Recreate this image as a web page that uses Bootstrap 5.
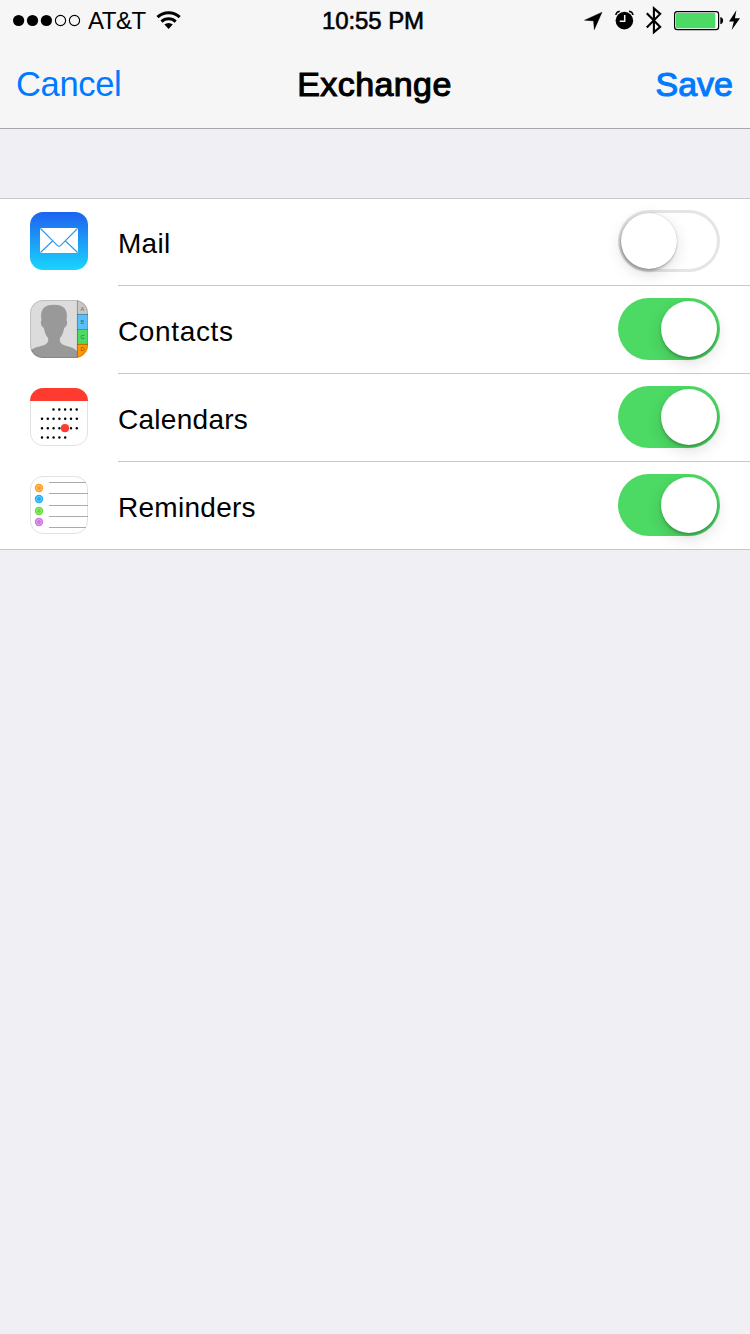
<!DOCTYPE html>
<html lang="en">
<head>
<meta charset="utf-8">
<meta name="viewport" content="width=device-width, initial-scale=1">
<title>Exchange</title>
<link rel="stylesheet" href="https://cdn.jsdelivr.net/npm/bootstrap@5.3.0/dist/css/bootstrap.min.css">
<style>
body { font-family: "Liberation Sans", Arial, sans-serif; background: #efeff4; color: #000; min-height: 1334px; }
svg { display: block; flex: none; }
.topbar { background: #f6f6f6; border-bottom: 1px solid #a7a7aa; height: 129px; }
.status-row { height: 40px; }
.side-col { flex: 1 1 0; }
.carrier { font-size: 24px; line-height: 40px; letter-spacing: -.5px; margin-left: 7px; margin-right: 10px; padding-top: 1px; }
.clock { font-size: 24px; line-height: 40px; -webkit-text-stroke: .6px #000; letter-spacing: -.1px; padding-top: 1px; margin-right: 4px; }
.title-row { height: 88px; padding: 0 17px 0 16px; font-size: 35px; line-height: 88px; }
.title-row a { color: #007aff; text-decoration: none; }
.cancel-link { font-size: 34.5px; letter-spacing: -.35px; }
.screen-title { font-size: 34px; -webkit-text-stroke: 1.1px #000; letter-spacing: .4px; }
.save-link { font-size: 34px; -webkit-text-stroke: 1.1px #007aff; letter-spacing: 0; }
.services { margin-top: 69px; border-top: 1px solid #c8c7cc; border-bottom: 1px solid #c8c7cc; background: #fff; }
.service { height: 88px; padding-left: 30px; gap: 30px; }
.service:first-child, .service:last-child { height: 87px; }
.service-body { border-bottom: 1px solid #c8c7cc; padding-right: 30px; }
.service:last-child .service-body { border-bottom: 0; }
.service-name { font-size: 28px; line-height: 40px; letter-spacing: .28px; padding-top: 4px; }
.service-name.wide { letter-spacing: .65px; }
.service svg, .service .toggle { margin-top: -2px; }
.service:first-child svg, .service:first-child .toggle { margin-top: -3px; }
.toggle { width: 102px; height: 62px; border-radius: 31px; background: #4cd964; padding: 3px; flex: none; }
.toggle.off { background: #fff; box-shadow: inset 0 0 0 3px #e5e5e5; }
.toggle span { display: block; width: 56px; height: 56px; border-radius: 50%; background: #fff; margin-left: auto; box-shadow: 0 2px 3px rgba(0,0,0,.25), 0 6px 16px rgba(0,0,0,.13); }
.toggle.off span { margin-left: 0; box-shadow: 0 0 1px rgba(0,0,0,.3), -1px 2px 3px rgba(0,0,0,.3), 0 5px 16px rgba(0,0,0,.13); }
</style>
</head>
<body>
<header class="topbar">
  <div class="status-row d-flex align-items-center">
    <div class="side-col d-flex align-items-center">
      <svg width="81" height="40" viewBox="0 0 81 40"><circle cx="18.6" cy="20.5" r="5.6"/><circle cx="32.5" cy="20.5" r="5.6"/><circle cx="46.4" cy="20.5" r="5.6"/><g fill="none" stroke="#000" stroke-width="1.1"><circle cx="60.5" cy="20.5" r="5.1"/><circle cx="74.5" cy="20.5" r="5.1"/></g></svg>
      <span class="carrier">AT&amp;T</span>
      <svg width="26" height="40" viewBox="156 0 26 40"><g fill="none" stroke="#000" stroke-width="3"><path d="M157.5 17.2a16.2 16.2 0 0 1 22.2 0"/><path d="M161.5 21.6a10.3 10.3 0 0 1 14.2 0"/></g><path d="M164.4 24.6a6.2 6.2 0 0 1 8.4 0l-4.2 4.3z"/></svg>
    </div>
    <div class="clock">10:55 PM</div>
    <div class="side-col d-flex justify-content-end">
      <svg width="26" height="40" viewBox="582 0 26 40"><path d="M584.500 20.200l17.500-8-7.700 17.500-.8-8.800z" stroke="#000" stroke-width=".4"/></svg>
      <svg width="32" height="40" viewBox="608 0 32 40"><circle cx="624.4" cy="20.6" r="8.8"/><path d="M615.800 15q.5-3.200 4-3.700M633 15q-.5-3.200-4-3.700" fill="none" stroke="#000" stroke-width="1.500"/><path d="M624.700 15v6.300h-5" fill="none" stroke="#f6f6f6" stroke-width="1.500"/></svg>
      <svg width="26" height="40" viewBox="640 0 26 40"><path d="M646.800 13.200l13.400 13.700-6.300 5.400V8.400l6.300 5.500-13.400 13.600" fill="none" stroke="#000" stroke-width="2.100"/></svg>
      <svg width="60" height="40" viewBox="666 0 60 40"><rect x="674.600" y="11.600" width="44" height="18" rx="2.600" fill="#fff" stroke="#000" stroke-width="1.200"/><rect x="676" y="13" width="39.300" height="15.200" rx="1" fill="#4cd964"/><path d="M720.300 17q2.800.6 2.800 3.600t-2.800 3.600z"/></svg>
      <svg width="24" height="40" viewBox="726 0 24 40"><path d="M736.400 10.200L729 21.500h4.800l-2.100 8.400 8.300-11.700h-5.100z"/></svg>
    </div>
  </div>
  <nav class="title-row d-flex align-items-center">
    <div class="side-col"><a class="cancel-link" href="#">Cancel</a></div>
    <div class="screen-title">Exchange</div>
    <div class="side-col text-end"><a class="save-link" href="#">Save</a></div>
  </nav>
</header>
<main class="services">
  <div class="service d-flex align-items-center">
    <svg width="58" height="58" viewBox="0 0 58 58"><defs><linearGradient id="mailSky" x2="0" y2="1"><stop stop-color="#1d62f0"/><stop offset="1" stop-color="#1ad5fd"/></linearGradient></defs><rect width="58" height="58" rx="13" fill="url(#mailSky)"/><rect x="10" y="16" width="38" height="25" rx="1" fill="#fff"/><path d="M10.500 16.500L27 33.200q2 2.200 4 0L47.500 16.500M10.500 40.500L22.500 29M47.500 40.500L35.500 29" fill="none" stroke="#2b96ee" stroke-width="1.100"/></svg>
    <div class="service-body d-flex flex-grow-1 h-100 align-items-center justify-content-between"><span class="service-name">Mail</span><div class="toggle off" role="switch" aria-checked="false" aria-label="Mail"><span></span></div></div>
  </div>
  <div class="service d-flex align-items-center">
    <svg width="58" height="58" viewBox="0 0 58 58"><defs><clipPath id="tile"><rect width="58" height="58" rx="13"/></clipPath></defs><g clip-path="url(#tile)"><path fill="#dcdcdc" d="M0 0h58v58H0z"/><path fill="#999" d="M0 51c3-4 11-4.500 15.500-6.600 2.700-1.300 3-3.800 2.600-6.300-2.500-2.800-3.400-6.300-4.400-10.400-2.600-.7-3.700-6-2.200-7.100C9.500 9 14.500 4.800 24 4.800S38.500 9 36.500 20.600c1.500 1.100.4 6.400-2.200 7.100-.9 4.100-1.900 7.600-4.400 10.400-.4 2.500-.1 5 2.600 6.300C37 46.500 44 47 47 51v7H0z"/><path fill="#c8c7c4" d="M47 0h11v14H47z"/><path fill="#5ac0fa" d="M47 14h11v15.500H47z"/><path fill="#4cd964" d="M47 29.500h11V44H47z"/><path fill="#ff9500" d="M47 44h11v14H47z"/><path d="M47.400 0v58M47 14.400h11M47 29.500h11M47 44.400h11" fill="none" stroke="#000" stroke-opacity=".3" stroke-width=".9"/><g font-size="5.500" text-anchor="middle" fill-opacity=".55"><text x="52.400" y="11.300">A</text><text x="52.400" y="24">B</text><text x="52.400" y="39">C</text><text x="52.400" y="51.200">D</text></g></g><rect x=".5" y=".5" width="57" height="57" rx="12.500" fill="none" stroke="#000" stroke-opacity=".13"/></svg>
    <div class="service-body d-flex flex-grow-1 h-100 align-items-center justify-content-between"><span class="service-name wide">Contacts</span><div class="toggle" role="switch" aria-checked="true" aria-label="Contacts"><span></span></div></div>
  </div>
  <div class="service d-flex align-items-center">
    <svg width="58" height="58" viewBox="0 0 58 58"><rect x=".5" y=".5" width="57" height="57" rx="12.500" fill="#fff" stroke="#e2e2e2"/><path d="M0 13A13 13 0 0 1 13 0h32a13 13 0 0 1 13 13z" fill="#ff3b30"/><g fill="none" stroke="#000" stroke-width="2.500" stroke-linecap="round" stroke-dasharray="0 5.800"><path d="M23.500 21.400h23.300M12 30.700h34.900M12 40.200h34.900M12 49.400h23.300"/></g><circle cx="35" cy="40.200" r="4.100" fill="#ff3b30"/></svg>
    <div class="service-body d-flex flex-grow-1 h-100 align-items-center justify-content-between"><span class="service-name">Calendars</span><div class="toggle" role="switch" aria-checked="true" aria-label="Calendars"><span></span></div></div>
  </div>
  <div class="service d-flex align-items-center">
    <svg width="58" height="58" viewBox="0 0 58 58"><rect x=".5" y=".5" width="57" height="57" rx="12.500" fill="#fff" stroke="#e2e2e2"/><path d="M19 6.500h37M19 17.500h39M19 29.500h39M19 40.500h39M19 51.500h37" fill="none" stroke="#aaa"/><g stroke-opacity=".4" stroke-width="1"><g fill="#ff9b20"><circle cx="9" cy="12" r="4.200"/><circle cx="9" cy="12" r="2.500" stroke="#fff"/></g><g fill="#1daaf8"><circle cx="9" cy="23" r="4.200"/><circle cx="9" cy="23" r="2.500" stroke="#fff"/></g><g fill="#63da38"><circle cx="9" cy="35" r="4.200"/><circle cx="9" cy="35" r="2.500" stroke="#fff"/></g><g fill="#cc73e1"><circle cx="9" cy="46" r="4.200"/><circle cx="9" cy="46" r="2.500" stroke="#fff"/></g></g></svg>
    <div class="service-body d-flex flex-grow-1 h-100 align-items-center justify-content-between"><span class="service-name">Reminders</span><div class="toggle" role="switch" aria-checked="true" aria-label="Reminders"><span></span></div></div>
  </div>
</main>
<script src="https://cdn.jsdelivr.net/npm/bootstrap@5.3.0/dist/js/bootstrap.bundle.min.js"></script>
</body>
</html>
